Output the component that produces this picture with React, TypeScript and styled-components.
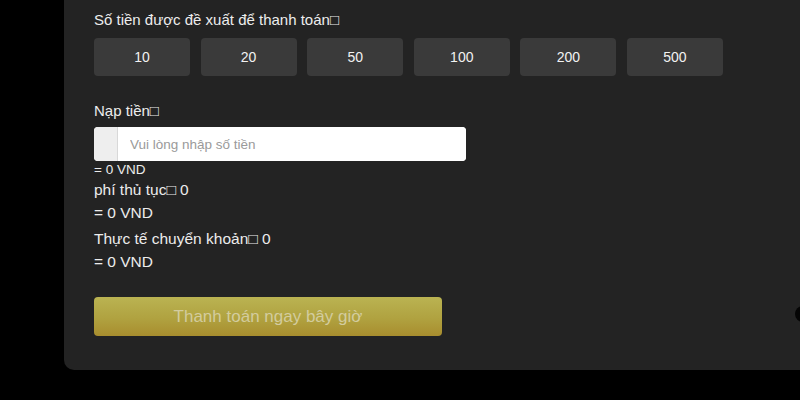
import styled, { createGlobalStyle } from 'styled-components';

const amounts = [10, 20, 50, 100, 200, 500];

function App() {
  return (
    <>
      <GlobalStyle />
      <Page>
        <Panel>
          <Label>Số tiền được đề xuất để thanh toán□</Label>
          <AmountRow>
            {amounts.map((amount) => (
              <AmountButton key={amount}>{amount}</AmountButton>
            ))}
          </AmountRow>

          <Label mt={24}>Nạp tiền□</Label>
          <InputGroup>
            <Addon />
            <AmountInput placeholder='Vui lòng nhập số tiền' />
          </InputGroup>
          <SmallLine>= 0 VND</SmallLine>

          <InfoBlock>
            <InfoLine>phí thủ tục□ 0</InfoLine>
            <InfoLine>= 0 VND</InfoLine>
          </InfoBlock>
          <InfoBlock gap>
            <InfoLine>Thực tế chuyển khoản□ 0</InfoLine>
            <InfoLine>= 0 VND</InfoLine>
          </InfoBlock>

          <PayButton>Thanh toán ngay bây giờ</PayButton>
        </Panel>
        <EdgeDot />
      </Page>
    </>
  );
}

export default App;

const GlobalStyle = createGlobalStyle`
  html, body {
    margin: 0;
    padding: 0;
    background: #000;
    overflow: hidden;
  }
  body {
    font-family: 'Liberation Sans', Arial, sans-serif;
    color: #ececec;
  }
`;
const Page = styled.div`
  position: relative;
  width: 800px;
  height: 400px;
  background: #000;
  overflow: hidden;
`;
const Panel = styled.div`
  margin-left: 64px;
  width: 760px;
  height: 370px;
  box-sizing: border-box;
  padding: 9px 0 0 30px;
  background: #232323;
  border-bottom-left-radius: 10px;
  display: flex;
  flex-direction: column;
  align-items: flex-start;
`;
const Label = styled.div<{ mt?: number }>`
  margin-top: ${(p) => p.mt ?? 0}px;
  font-size: 15px;
  line-height: 22px;
  color: #ededed;
`;
const AmountRow = styled.div`
  margin-top: 7px;
  display: flex;
  gap: 10.6px;
`;
const AmountButton = styled.button`
  width: 96px;
  height: 38px;
  border: none;
  border-radius: 4px;
  background: #3a3a3a;
  color: #f2f2f2;
  font-family: 'Liberation Sans', Arial, sans-serif;
  font-size: 14px;
  cursor: pointer;
`;
const InputGroup = styled.div`
  margin-top: 5px;
  width: 372px;
  height: 34px;
  display: flex;
  background: #fff;
  border-radius: 4px;
  overflow: hidden;
`;
const Addon = styled.div`
  width: 23px;
  background: #eeeeee;
  border-right: 1px solid #d8d8d8;
`;
const AmountInput = styled.input`
  flex: 1;
  border: none;
  outline: none;
  padding: 0 12px;
  font-family: 'Liberation Sans', Arial, sans-serif;
  font-size: 13.5px;
  color: #333;
  background: #fff;
  &::placeholder {
    color: #9a9a9a;
  }
`;
const SmallLine = styled.div`
  font-size: 13.5px;
  line-height: 17px;
  color: #ececec;
`;
const InfoBlock = styled.div<{ gap?: boolean }>`
  margin-top: ${(p) => (p.gap ? 3 : 0)}px;
  display: flex;
  flex-direction: column;
`;
const InfoLine = styled.div`
  font-size: 15.5px;
  line-height: 23px;
  color: #ececec;
`;
const PayButton = styled.button`
  margin-top: 24px;
  width: 348px;
  height: 39px;
  border: none;
  border-radius: 4px;
  background: linear-gradient(to bottom, #bab352 0%, #b0a240 55%, #a88d2e 100%);
  color: #d3cc9e;
  font-family: 'Liberation Sans', Arial, sans-serif;
  font-size: 17px;
  cursor: pointer;
`;
const EdgeDot = styled.div`
  position: absolute;
  left: 795px;
  top: 306px;
  width: 16px;
  height: 16px;
  border-radius: 50%;
  background: #050505;
`;
